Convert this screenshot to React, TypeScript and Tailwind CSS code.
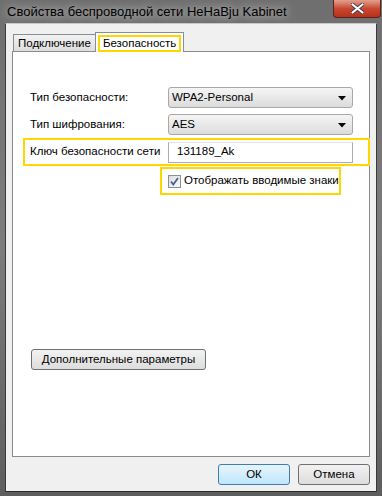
import React from 'react';

const font = { fontFamily: '"Liberation Sans", Arial, sans-serif' };

function Select({ value }: { value: string }) {
  return (
    <div className="relative flex h-[21px] w-[185px] items-center rounded-[3px] border border-[#a8a8a8] bg-gradient-to-b from-[#f5f5f5] to-[#dcdcdc] pl-[3px] text-[11.5px] text-black">
      {value}
      <svg className="absolute right-[6px] top-[8px]" width="8" height="5" viewBox="0 0 8 5">
        <path d="M0 0h8L4 4.5z" fill="#000" />
      </svg>
    </div>
  );
}

function WinButton({ children, w, primary }: { children: React.ReactNode; w: string; primary?: boolean }) {
  return (
    <div
      className={`flex h-[21px] items-center justify-center rounded-[3px] border text-[11.5px] text-black ${w} ${
        primary
          ? 'border-[#3c7fb1] bg-gradient-to-b from-[#e8f5fc] to-[#bee6fd]'
          : 'border-[#707070] bg-gradient-to-b from-[#f2f2f2] to-[#dddddd]'
      }`}
    >
      {children}
    </div>
  );
}

export default function App() {
  return (
    <div className="h-[496px] w-[382px] bg-gradient-to-b from-[#6f6f6f] via-[#7c7c7c] to-[#5e5e5e]" style={font}>
      {/* title bar */}
      <div className="relative flex h-[23px] items-center pl-[7px]">
        <span className="text-[13px] text-black [text-shadow:0_0_8px_rgba(255,255,255,0.9)]">
          Свойства беспроводной сети HeHaBju Kabinet
        </span>
        <div className="absolute right-[1px] top-0 flex h-[18px] w-[48px] items-center justify-center rounded-b-[4px] border border-t-0 border-[#5b2020] bg-gradient-to-b from-[#e0a090] via-[#c8482f] to-[#b8301a]">
          <svg width="13" height="11" viewBox="0 0 13 11">
            <path d="M1.5 1.5l10 8M11.5 1.5l-10 8" stroke="#3a3a4a" strokeWidth="3.6" strokeLinecap="round" />
            <path d="M1.5 1.5l10 8M11.5 1.5l-10 8" stroke="#fff" strokeWidth="2.2" strokeLinecap="round" />
          </svg>
        </div>
      </div>

      {/* client */}
      <div className="mx-[5px] flex h-[469px] flex-col border border-t-[#c8c8c8] border-x-[#3a3a3a] border-b-[#2a2a2a] bg-[#f0f0f0] px-[6px] pt-[8px]">
        {/* tabs */}
        <div className="flex items-end pl-[1px]">
          <div className="mb-[-1px] flex h-[18px] items-center border border-b-0 border-[#898c95] bg-gradient-to-b from-[#f2f2f2] to-[#dcdcdc] px-[4px] text-[11.5px] text-black">
            Подключение
          </div>
          <div className="relative z-10 mb-[-1px] ml-[-1px] flex h-[20px] items-start border border-b-0 border-[#898c95] bg-white px-[2px] pt-[2px]">
            <div className="border-[2px] border-[#ffd700] px-[3px] text-[11.5px] leading-[13px] text-black">Безопасность</div>
          </div>
        </div>

        <div className="flex h-[406px] flex-col border border-[#898c95] bg-white pl-[17px] pt-[35px]">
          <div className="flex items-center">
            <span className="w-[138px] text-[11.5px] text-black">Тип безопасности:</span>
            <Select value="WPA2-Personal" />
          </div>
          <div className="mt-[6px] flex items-center">
            <span className="w-[138px] text-[11.5px] text-black">Тип шифрования:</span>
            <Select value="AES" />
          </div>
          <div className="ml-[-7px] mt-[3px] flex h-[28px] w-[347px] items-center border-[2px] border-[#ffd700] pl-[5px]">
            <span className="w-[138px] whitespace-nowrap text-[11.5px] text-black">Ключ безопасности сети</span>
            <div className="flex h-[21px] w-[185px] items-center border border-[#abadb3] border-t-[#e3e3e3] bg-white pl-[8px] text-[11.5px] text-black">
              131189_Ak
            </div>
          </div>
          <div className="ml-[130px] mt-[1px] flex h-[28px] w-[181px] items-center border-[2px] border-[#ffd700] pl-[6px]">
            <div className="flex h-[13px] w-[13px] shrink-0 items-center justify-center border border-[#8e8f8f] bg-gradient-to-br from-[#dcdcdc] to-[#fafafa]">
              <svg width="9" height="9" viewBox="0 0 9 9">
                <path d="M1 4.5l2.3 3L8 1" fill="none" stroke="#4a5f97" strokeWidth="1.8" />
              </svg>
            </div>
            <span className="ml-[3px] whitespace-nowrap text-[11.5px] text-black">Отображать вводимые знаки</span>
          </div>

          <div className="ml-[1px] mt-[154px]">
            <WinButton w="w-[175px]">Дополнительные параметры</WinButton>
          </div>
        </div>

        <div className="mt-[7px] flex justify-end gap-[8px]">
          <WinButton w="w-[72px]" primary>
            ОК
          </WinButton>
          <WinButton w="w-[72px]">Отмена</WinButton>
        </div>
      </div>
    </div>
  );
}
